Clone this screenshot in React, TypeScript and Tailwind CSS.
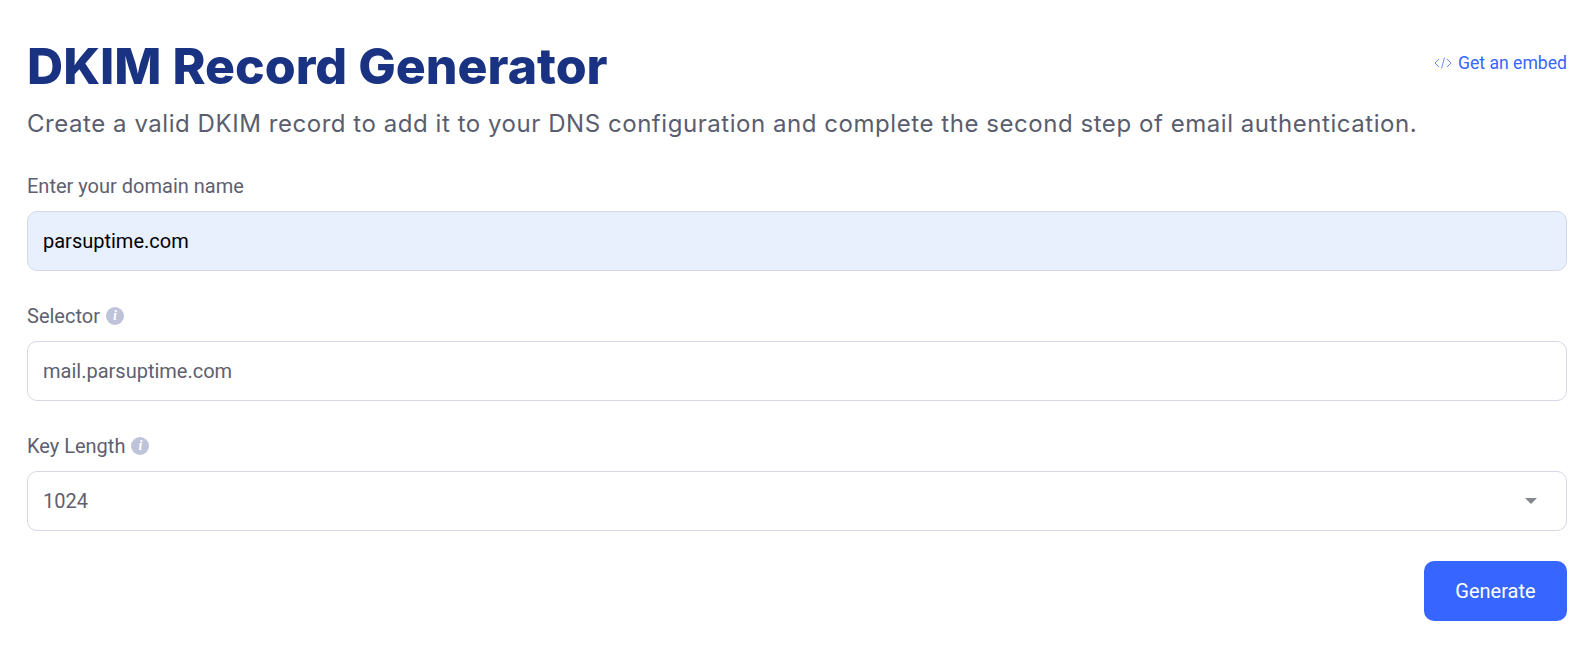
function InfoDot() {
    return (
        <span className="w-[18px] h-[18px] rounded-full bg-[#bec3da] text-white flex items-center justify-center text-[14px] font-bold italic font-['Liberation_Serif',serif]">
            i
        </span>
    );
}

export default function App() {
    return (
        <div className="w-[1586px] h-[646px] bg-white pl-[27px] pr-[19px] pt-[28px] font-['Roboto',sans-serif] overflow-hidden">
            <div className="flex justify-between items-start">
                <h1 className="text-[50px] leading-[76px] font-extrabold text-[#1a3282] font-['Inter',sans-serif]">
                    DKIM Record Generator
                </h1>
                <a className="flex items-center gap-[6px] mt-[23px] text-[17.6px] leading-[24px] text-[#3666ff]">
                    <svg width="18" height="14" viewBox="0 0 18 14" fill="none" stroke="#6e8fff" strokeWidth="1">
                        <path d="M5 3 1 7l4 4M13 3l4 4-4 4M10.5 1.5l-3 11" />
                    </svg>
                    Get an embed
                </a>
            </div>
            <p className="mt-[2px] text-[24px] leading-[36px] text-[#5a5d6e] font-['Inter',sans-serif] font-normal tracking-[0.55px] whitespace-nowrap">
                Create a valid DKIM record to add it to your DNS configuration and complete the second step of email authentication.
            </p>

            <div className="mt-[30px] flex flex-col gap-[31px]">
                <div>
                    <label className="block text-[20px] leading-[28px] text-[#5e6070] mb-[11px]">Enter your domain name</label>
                    <div className="h-[60px] rounded-[10px] border border-[#d5d8e8] bg-[#e8f0fe] flex items-center px-[15px] text-[20px] text-black">
                        parsuptime.com
                    </div>
                </div>
                <div>
                    <label className="flex items-center gap-[6px] text-[20px] leading-[28px] text-[#5e6070] mb-[11px]">
                        Selector <InfoDot />
                    </label>
                    <div className="h-[60px] rounded-[10px] border border-[#d5d8e8] bg-white flex items-center px-[15px] text-[20px] text-[#5e6070]">
                        mail.parsuptime.com
                    </div>
                </div>
                <div>
                    <label className="flex items-center gap-[6px] text-[20px] leading-[28px] text-[#5e6070] mb-[11px]">
                        Key Length <InfoDot />
                    </label>
                    <div className="h-[60px] rounded-[10px] border border-[#d5d8e8] bg-white flex items-center justify-between pl-[15px] pr-[29px] pb-[1px] text-[20px] text-[#5e6070]">
                        1024
                        <span className="w-0 h-0 border-l-[6px] border-r-[6px] border-t-[6px] border-l-transparent border-r-transparent border-t-[#85878f]" />
                    </div>
                </div>
            </div>

            <div className="flex justify-end mt-[30px]">
                <button className="w-[143px] h-[60px] rounded-[10px] bg-[#3666ff] text-white text-[20px] font-normal pb-[1px]">
                    Generate
                </button>
            </div>
        </div>
    );
}
